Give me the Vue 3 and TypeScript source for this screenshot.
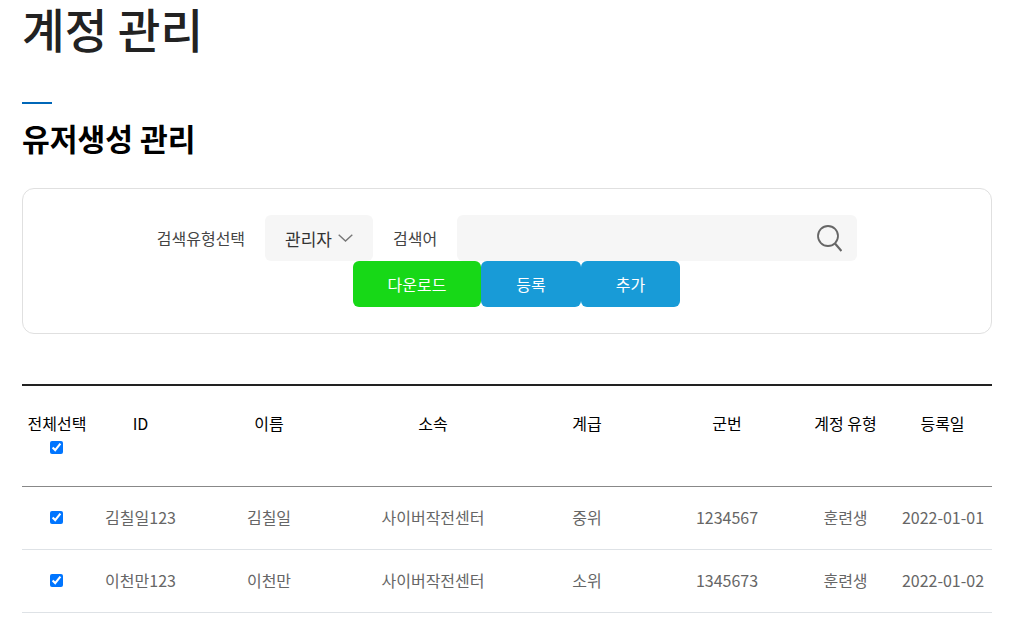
<script setup lang="ts">
import { ref } from 'vue'

interface UserRow {
  id: string
  name: string
  unit: string
  rank: string
  serial: string
  type: string
  date: string
}

const columns = ['ID', '이름', '소속', '계급', '군번', '계정 유형', '등록일']

const rows = ref<UserRow[]>([
  { id: '김칠일123', name: '김칠일', unit: '사이버작전센터', rank: '중위', serial: '1234567', type: '훈련생', date: '2022-01-01' },
  { id: '이천만123', name: '이천만', unit: '사이버작전센터', rank: '소위', serial: '1345673', type: '훈련생', date: '2022-01-02' }
])
</script>

<template>
  <div class="page">
    <h1 class="title">계정 관리</h1>
    <div class="accent"></div>
    <h2 class="subtitle">유저생성 관리</h2>

    <section class="search-box">
      <div class="search-row">
        <span class="label">검색유형선택</span>
        <div class="select">
          <span>관리자</span>
          <svg width="15" height="8" viewBox="0 0 15 8" fill="none">
            <path d="M0.7 0.7 7.5 7 14.3 0.7" stroke="#777" stroke-width="1.4" />
          </svg>
        </div>
        <span class="label">검색어</span>
        <div class="search-input">
          <svg width="25" height="27" viewBox="0 0 25 27" fill="none">
            <circle cx="11" cy="11" r="10" stroke="#666" stroke-width="1.8" />
            <path d="M18 18.5 24.5 26" stroke="#666" stroke-width="2.2" />
          </svg>
        </div>
      </div>
      <div class="button-row">
        <button class="btn green" type="button">다운로드</button>
        <button class="btn blue" type="button">등록</button>
        <button class="btn blue last" type="button">추가</button>
      </div>
    </section>

    <table class="user-table">
      <colgroup>
        <col style="width: 69px" />
        <col style="width: 99px" />
        <col style="width: 158px" />
        <col style="width: 170px" />
        <col style="width: 138px" />
        <col style="width: 142px" />
        <col style="width: 95px" />
        <col style="width: 99px" />
      </colgroup>
      <thead>
        <tr>
          <th class="check-head">
            전체선택
            <input class="check" type="checkbox" checked />
          </th>
          <th v-for="col in columns" :key="col">{{ col }}</th>
        </tr>
      </thead>
      <tbody>
        <tr v-for="row in rows" :key="row.id">
          <td class="check-cell"><input class="check" type="checkbox" checked /></td>
          <td>{{ row.id }}</td>
          <td>{{ row.name }}</td>
          <td>{{ row.unit }}</td>
          <td>{{ row.rank }}</td>
          <td>{{ row.serial }}</td>
          <td>{{ row.type }}</td>
          <td class="date-cell">{{ row.date }}</td>
        </tr>
      </tbody>
    </table>
  </div>
</template>

<style>
html,
body {
  background: #fff;
  overflow: hidden;
}
</style>

<style scoped>
.page {
  height: 639px;
  overflow: hidden;
  box-sizing: border-box;
  padding: 0 21px 0 22px;
  font-family: 'Noto Sans CJK KR', 'Noto Sans', sans-serif;
  font-size: 16px;
  color: #444;
}

.title {
  margin: 0;
  font-size: 46.4px;
  font-weight: 500;
  line-height: 56px;
  color: #222;
}

.accent {
  width: 30px;
  height: 2px;
  margin-top: 46px;
  background: #0067b8;
}

.subtitle {
  margin: 12px 0 0;
  font-size: 30.2px;
  font-weight: 700;
  line-height: 44px;
  color: #000;
}

.search-box {
  box-sizing: border-box;
  height: 146px;
  margin-top: 28px;
  padding-top: 26px;
  border: 1px solid #e0e0e0;
  border-radius: 12px;
}

.search-row {
  display: flex;
  align-items: center;
  justify-content: center;
  height: 46px;
}

.label {
  margin-right: 20px;
  white-space: nowrap;
}

.select {
  display: flex;
  align-items: center;
  gap: 6px;
  box-sizing: border-box;
  width: 108px;
  height: 46px;
  margin-right: 20px;
  padding-left: 20px;
  border-radius: 6px;
  background: #f6f6f6;
  font-size: 17px;
  color: #333;
}

.search-input {
  display: flex;
  align-items: center;
  justify-content: flex-end;
  box-sizing: border-box;
  width: 400px;
  height: 46px;
  padding-right: 15px;
  border-radius: 6px;
  background: #f6f6f6;
}

.button-row {
  display: flex;
  justify-content: center;
  padding-left: 19px;
}

.btn {
  width: 100px;
  height: 46px;
  padding: 0;
  border: 0;
  border-radius: 6px;
  font: inherit;
  color: #fff;
}

.btn.green {
  width: 128px;
  background: #17d817;
}

.btn.blue {
  background: #189bd7;
}

.btn.last {
  width: 99px;
}

.user-table {
  width: 970px;
  margin-top: 50px;
  border-collapse: collapse;
  table-layout: fixed;
  border-top: 2px solid #222;
}

th {
  height: 101px;
  padding: 25px 0 0;
  box-sizing: border-box;
  vertical-align: top;
  font-weight: 400;
  line-height: 24px;
  color: #000;
  border-bottom: 1px solid #888;
  white-space: normal;
}

th.check-head {
  text-indent: 1px;
}

td {
  height: 63px;
  padding: 0 0 2px;
  box-sizing: border-box;
  text-align: center;
  color: #666;
  border-bottom: 1px solid #dee2e6;
  white-space: nowrap;
}

td.check-cell {
  padding: 0;
}

td.date-cell {
  padding-left: 1px;
}

.check {
  display: block;
  width: 13px;
  height: 13px;
  margin: 0 auto;
}

th .check {
  margin-top: 6px;
}
</style>
